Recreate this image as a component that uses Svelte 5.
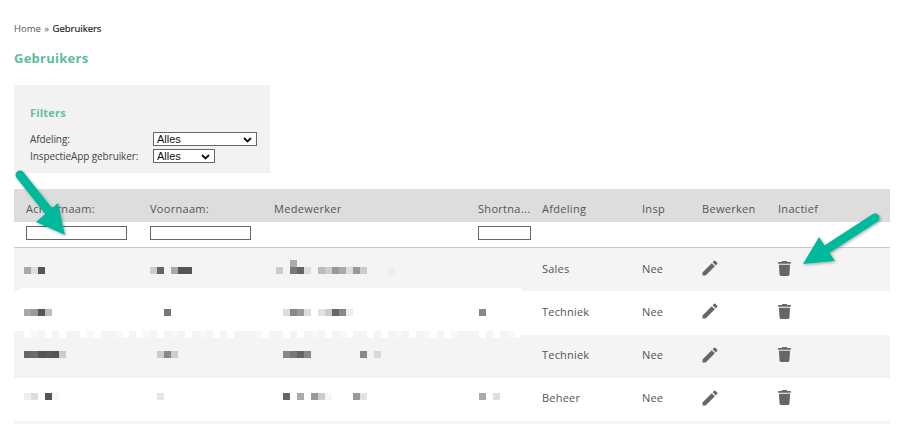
<script>
  const W = 'transparent';
  // censored names: [start x, colours of the 7px blocks, optional margin-top]
  // top = distance from the top of the row to the blocks
  const rows = [
    { afd: 'Sales', shade: true, top: 19, last: [[24, ['#aaa', '#ddd', '#555']]], first: [[150, ['#ccc', '#666', W, '#aaa', '#555', '#555']]],
      med: [[290, ['#aaa'], -7], [276, ['#ccc', W, '#777', '#666', '#ddd', W, '#bbb', '#ccc', '#999', '#aaa', '#ddd', '#999', '#ccc', W, W, W, '#eee']]], short: [] },
    { afd: 'Techniek', shade: false, top: 18, last: [[24, ['#aaa', '#999', '#555', '#bbb']]], first: [[164, ['#777']]],
      med: [[283, ['#ddd', '#888', '#999', '#ddd', W, '#e2e2e2', '#ccc', '#666', '#888', '#eee']]], short: [[479, ['#888']]] },
    { afd: 'Techniek', shade: true, top: 16.5, last: [[24, ['#666', '#6c6c6c', '#555', '#5a5a5a', '#555', '#ccc']]], first: [[157, ['#ccc', '#888', '#ccc']]],
      med: [[283, ['#888', '#777', '#666', '#888', W, W, W, W, W, W, W, '#888', W, '#d8d8d8']]], short: [] },
    { afd: 'Beheer', shade: false, top: 15, last: [[24, ['#eee', '#ddd', W, '#555', '#f6f6f6']]], first: [[157, ['#e6e6e6']]],
      med: [[283, ['#666', W, '#aaa', W, '#999', '#ccc', '#f6f6f6', W, W, W, '#999', '#e2e2e2']]], short: [[479, ['#aaa', W, '#e0e0e0']]] }
  ];
  const whiteBlocks = [0, 3, 5, 8, 10, 14, 16, 19, 23, 27, 29, 34, 37, 39, 43, 46, 49, 51, 55, 58, 60, 65, 67, 70];
  const strip = Array.from({ length: 71 }, (_, i) => whiteBlocks.includes(i) ? '#fff' : (i % 4 === 1 ? '#f8f8f8' : '#f4f4f4'));
</script>

{#snippet mosaic(groups, cellLeft, top)}
  <div class="cell-mosaic" style="margin-top: {top}px">
    {#each groups as [x, blocks, dy]}
      <span class="mosaic" style="margin-left: {x - cellLeft}px; margin-top: {dy ?? 0}px">
        {#each blocks as c}<i style="background: {c}"></i>{/each}
      </span>
    {/each}
  </div>
{/snippet}

<div class="page">
  <div class="crumbs">Home » <span>Gebruikers</span></div>
  <h1>Gebruikers</h1>

  <div class="filters">
    <h2>Filters</h2>
    <div class="filter">
      <label for="afd">Afdeling:</label>
      <select id="afd" class="wide"><option>Alles</option></select>
    </div>
    <div class="filter">
      <label for="app">InspectieApp gebruiker:</label>
      <select id="app" class="narrow"><option>Alles</option></select>
    </div>
  </div>

  <div class="table">
    <div class="row head">
      <div>Achternaam:</div>
      <div>Voornaam:</div>
      <div>Medewerker</div>
      <div>Shortna...</div>
      <div>Afdeling</div>
      <div>Insp</div>
      <div>Bewerken</div>
      <div>Inactief</div>
    </div>
    <div class="row search">
      <div><input /></div>
      <div><input /></div>
      <div></div>
      <div><input class="small" /></div>
    </div>
    {#each rows as r, i}
      <div class="row body" class:shade={r.shade}>
        {#if i === 0}<div class="patch"></div>{/if}
        {#if i === 2}
          <div class="strip">{#each strip as c}<i style="background: {c}"></i>{/each}</div>
        {/if}
        {@render mosaic(r.last, 26, r.top)}
        {@render mosaic(r.first, 150, r.top)}
        {@render mosaic(r.med, 274, r.top)}
        {@render mosaic(r.short, 478, r.top)}
        <div class="txt">{r.afd}</div>
        <div class="txt">Nee</div>
        <div class="txt">
          <svg class="icon pencil" width="20" height="20" viewBox="0 0 24 24"><path d="M3 17.25V21h3.75L17.81 9.94l-3.75-3.75L3 17.25zM20.71 7.04a1 1 0 0 0 0-1.41l-2.34-2.34a1 1 0 0 0-1.41 0l-1.83 1.83 3.75 3.75 1.83-1.83z" /></svg>
        </div>
        <div class="txt">
          <svg class="icon" width="13" height="15" viewBox="0 0 448 512"><path d="M135 17.700C140.400 6.800 151.500 0 163.500 0h121c12 0 23.100 6.800 28.500 17.700L320 32h96c17.700 0 32 14.300 32 32s-14.300 32-32 32H32C14.300 96 0 81.700 0 64s14.300-32 32-32h96l7-14.300zM32 128h384l-21.200 339c-1.600 25.300-22.600 45-47.900 45H101.100c-25.300 0-46.300-19.700-47.900-45L32 128z" /></svg>
        </div>
      </div>
    {/each}
    <div class="tail"></div>
  </div>

  <svg class="arrows" width="904" height="424" viewBox="0 0 904 424">
    <defs>
      <filter id="soft" x="-20%" y="-20%" width="140%" height="140%">
        <feDropShadow dx="1" dy="1" stdDeviation="1.500" flood-color="#000" flood-opacity="0.35" />
      </filter>
    </defs>
    <g filter="url(#soft)" fill="#00b89c">
      <path d="M20 175 L51 214" stroke="#00b89c" stroke-width="9" stroke-linecap="round" />
      <path d="M65 235 L36 222 L58 203 Z" />
      <path d="M875 218 L821 253" stroke="#00b89c" stroke-width="9" stroke-linecap="round" />
      <path d="M803 264 L819 237 L835 261 Z" />
    </g>
  </svg>
</div>

<style>
  :global(body) { margin: 0; background: #fff; }
  .page {
    position: relative;
    width: 904px;
    height: 424px;
    overflow: hidden;
    box-sizing: border-box;
    padding: 22px 14px 0;
    font-family: "Open Sans", sans-serif;
    font-size: 11px;
    color: #555;
  }
  .crumbs { font-size: 9.5px; word-spacing: 1px; line-height: 14px; color: #555; }
  .crumbs span { color: #222; -webkit-text-stroke: 0.2px #222; }
  h1 {
    margin: 13px 0 0;
    font-size: 13px;
    line-height: 18px;
    font-weight: 700;
    color: #5dbd9b;
    letter-spacing: 0.25px;
  }
  .filters {
    width: 256px;
    height: 88px;
    margin-top: 18px;
    padding: 21px 13px 0 16px;
    box-sizing: border-box;
    background: #f2f2f2;
  }
  h2 {
    margin: 0 0 10px;
    font-size: 11px;
    line-height: 14px;
    font-weight: 700;
    color: #66c0a0;
    letter-spacing: 0.2px;
  }
  .filter { display: flex; align-items: center; height: 17px; }
  label { width: 123px; line-height: 14px; font-size: 10px; letter-spacing: -0.1px; color: #444; white-space: nowrap; }
  select {
    appearance: none;
    height: 14px;
    padding: 0 0 0 3px;
    border: 1px solid #666;
    border-radius: 0;
    font-family: "Liberation Sans", Arial, sans-serif;
    font-size: 11px;
    line-height: 12px;
    color: #111;
    box-sizing: border-box;
    background-color: #fff;
    background-repeat: no-repeat;
    background-size: 9px 6px;
    background-image: url("data:image/svg+xml,%3Csvg xmlns='http://www.w3.org/2000/svg' viewBox='0 0 9 6'%3E%3Cpath d='M1 1l3.500 3.500L8 1' fill='none' stroke='%23111' stroke-width='1.800'/%3E%3C/svg%3E");
  }
  select.wide { width: 104px; background-position: 89px 4px; }
  select.narrow { width: 62px; background-position: 47px 4px; }

  .table { margin-top: 16px; width: 876px; }
  .row {
    display: grid;
    grid-template-columns: 124px 124px 204px 64px 100px 60px 76px 112px;
    padding-left: 12px;
    position: relative;
  }
  .head {
    height: 33px;
    align-items: center;
    background: #ddd;
    color: #555;
    letter-spacing: 0.3px;
  }
  .head div { padding-top: 6px; line-height: 14px; }
  .search {
    height: 26px;
    padding-top: 4px;
    box-sizing: border-box;
    border-bottom: 1px solid #c8c8c8;
  }
  input {
    display: block;
    box-sizing: border-box;
    width: 101px;
    height: 14px;
    padding: 0;
    border: 1px solid #666;
    border-radius: 0;
    background: #fff;
  }
  input.small { width: 53px; }
  .body { height: 43.25px; letter-spacing: 0.2px; }
  .shade { background: #f4f4f4; }
  .txt { align-self: center; padding-bottom: 3px; }
  .icon { display: block; fill: #666; }
  .pencil { margin-left: -2.5px; }
  .mosaic { display: flex; }
  .mosaic i { display: block; flex: none; width: 7px; height: 7px; }
  .patch {
    position: absolute;
    left: 6px;
    width: 502px;
    bottom: 0;
    height: 3px;
    background: #fff;
  }
  .strip {
    position: absolute;
    left: 0;
    top: -4px;
    display: flex;
    height: 7px;
  }
  .strip::before { content: ""; width: 10px; background: #f4f4f4; }
  .strip i { display: block; width: 7px; height: 7px; }
  .tail { height: 6px; background: #f4f4f4; }
  .arrows { position: absolute; left: 0; top: 0; pointer-events: none; }
</style>
